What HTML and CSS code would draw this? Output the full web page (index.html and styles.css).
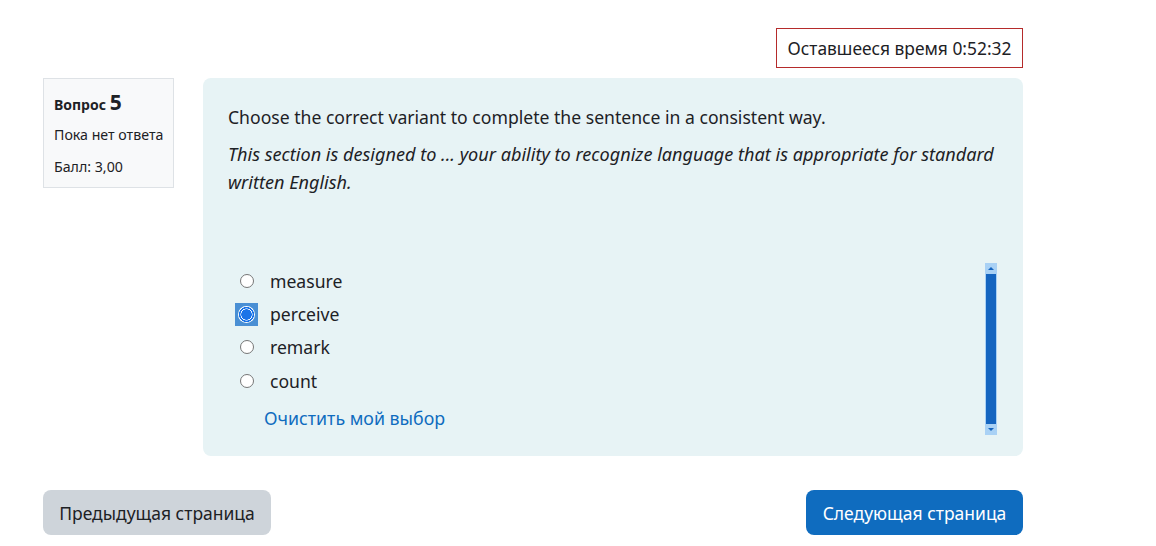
FILE: index.html
```html
<!DOCTYPE html>
<html lang="ru">
<head>
<meta charset="utf-8">
<title>Вопрос 5</title>
<link rel="stylesheet" href="styles.css">
</head>
<body>
<div class="page">
  <div class="timer-row">
    <div class="timer">Оставшееся время 0:52:32</div>
  </div>
  <div class="question">
    <div class="info">
      <h3 class="no">Вопрос <span class="qno">5</span></h3>
      <div class="state">Пока нет ответа</div>
      <div class="grade">Балл: 3,00</div>
    </div>
    <div class="content">
      <p class="qtext">Choose the correct variant to complete the sentence in a consistent way.</p>
      <p class="qtext italic">This section is designed to ... your ability to recognize language that is appropriate for standard written English.</p>
      <div class="answer-box">
        <div class="answers">
          <label class="opt"><span class="radio-wrap"><span class="radio"></span></span><span class="opt-text">measure</span></label>
          <label class="opt"><span class="radio-wrap focus"><span class="radio checked"></span></span><span class="opt-text">perceive</span></label>
          <label class="opt"><span class="radio-wrap"><span class="radio"></span></span><span class="opt-text">remark</span></label>
          <label class="opt"><span class="radio-wrap"><span class="radio"></span></span><span class="opt-text">count</span></label>
          <a class="clear" href="#">Очистить мой выбор</a>
        </div>
        <div class="scrollbar">
          <div class="arrow up"></div>
          <div class="thumb"></div>
          <div class="arrow down"></div>
        </div>
      </div>
    </div>
  </div>
  <div class="buttons">
    <button class="btn prev">Предыдущая страница</button>
    <button class="btn next">Следующая страница</button>
  </div>
</div>
</body>
</html>
```
FILE: styles.css
```css
* { box-sizing: border-box; }
html, body { margin: 0; padding: 0; background: #fff; }
body {
  font-family: "Noto Sans", "Open Sans", sans-serif;
  color: #1d2125;
}
.page {
  width: 1023px;
  padding: 28px 0 0 43px;
}
.timer-row {
  display: flex;
  justify-content: flex-end;
}
.timer {
  width: 247px;
  height: 40px;
  border: 1px solid #b52b2b;
  font-size: 17.4px;
  display: flex;
  align-items: center;
  justify-content: center;
  color: #1d2125;
}
.question {
  margin-top: 10px;
  display: flex;
  gap: 29px;
  align-items: flex-start;
}
.info {
  width: 131px;
  height: 110px;
  background: #f8f9fa;
  border: 1px solid #dee2e6;
  padding: 10px 4px 10px 10px;
  white-space: nowrap;
}
.info .no {
  margin: 0;
  font-size: 14px;
  font-weight: 700;
  line-height: 26px;
}
.info .qno { font-size: 21px; }
.info .state, .info .grade {
  font-size: 14.2px;
  line-height: 20px;
}
.info .state { margin-top: 7px; }
.info .grade { margin-top: 12px; }
.content {
  flex: 1;
  height: 378px;
  background: #e7f3f5;
  border-radius: 8px;
  padding: 25px 26px 20px 25px;
}
.qtext {
  margin: 0 0 9px;
  font-size: 17.6px;
  line-height: 28px;
}
.qtext.italic { font-style: italic; margin-bottom: 0; font-size: 18.1px; }
.answer-box {
  margin-top: 67px;
  height: 172px;
  display: flex;
  justify-content: space-between;
}
.answers {
  display: flex;
  flex-direction: column;
  padding-top: 1px;
}
.opt {
  display: flex;
  align-items: center;
  height: 33.4px;
  font-size: 17.6px;
}
.radio-wrap {
  width: 23px;
  height: 23px;
  margin-left: 7px;
  margin-right: 12px;
  display: flex;
  align-items: center;
  justify-content: center;
}
.radio-wrap.focus { background: #4a8fd4; }
.radio {
  width: 14px;
  height: 14px;
  border-radius: 50%;
  border: 1px solid #767676;
  background: #fff;
}
.radio.checked {
  width: 17px;
  height: 17px;
  border: none;
  background: radial-gradient(circle, #1a73e8 0 5px, #fff 5.5px 5.8px, #1a73e8 6.3px 7.3px, #fff 7.8px);
}
.clear {
  margin-left: 36px;
  margin-top: 8px;
  font-size: 17.8px;
  color: #0f6cbf;
  text-decoration: none;
}
.scrollbar {
  width: 12px;
  height: 172px;
  background: #a9d1f5;
  display: flex;
  flex-direction: column;
  align-items: center;
}
.thumb {
  width: 10px;
  flex: 1;
  background: #1565c0;
}
.arrow {
  width: 0; height: 0;
  border-left: 3px solid transparent;
  border-right: 3px solid transparent;
  margin: 4px 0;
}
.arrow.up { border-bottom: 3px solid #1565c0; }
.arrow.down { border-top: 3px solid #1565c0; }
.buttons {
  margin-top: 34px;
  display: flex;
  justify-content: space-between;
}
.btn {
  height: 45px;
  border: none;
  border-radius: 8px;
  font-family: "Noto Sans", "Open Sans", sans-serif;
  font-size: 17.5px;
  padding: 0 12px;
}
.btn.prev { background: #ced4da; color: #1d2125; width: 228px; }
.btn.next { background: #0f6cbf; color: #fff; width: 217px; }
```
